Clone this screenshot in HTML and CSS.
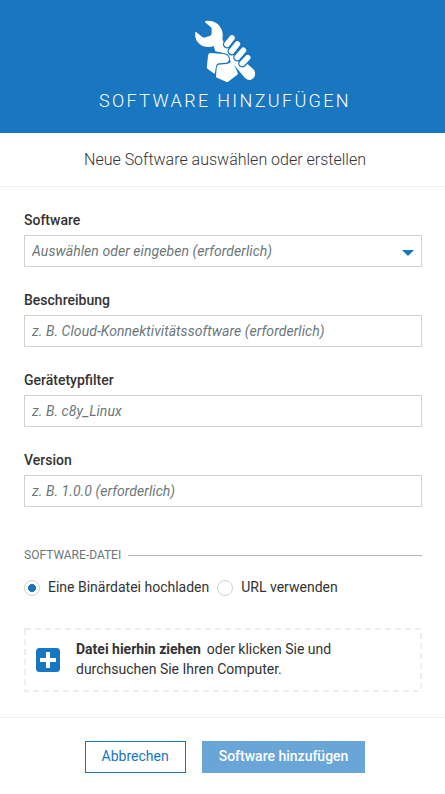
FILE: index.html
```html
<!DOCTYPE html>
<html lang="de">
<head>
<meta charset="utf-8">
<title>Software hinzufügen</title>
<link rel="stylesheet" href="styles.css">
</head>
<body>
<form class="modal">
  <header class="modal-header">
    <svg class="tool-icon" viewBox="39 24 192 192" aria-hidden="true">
      <path fill="#fff" d="M75 37Q72 33 83 32C112 30 134 57 127 86Q128 94 134 99L220 178C229 187 226 203 216 208Q205 213 195 204L134 132Q127 127 117 126L106 124L101 108Q90 112 77 110C54 106 43 86 46 67Q47 63 51 68L67 81Q71 84 77 82L91 77Q95 75 95 70V56Q95 53 91 50Z"/>
      <g class="finger-gap"><path d="M156 84L141 103M172 102L155 124M190 121L172 142M203 143L187 160"/></g>
      <g class="finger"><path d="M156 84L141 103M172 102L155 124M190 121L172 142M203 143L187 160"/></g>
      <path class="palm" d="M90 129L129 132Q140 132 145 140Q151 154 139 158L117 160Q109 161 108 170L104 192L84 178Q79 174 81 166L84 137Q85 129 90 129Z"/>
      <path fill="#fff" d="M115 164L140 162Q151 160 155 149L173 188Q175 192 170 196L142 217L108 202L110 173Q111 165 115 164Z"/>
    </svg>
    <h1>Software hinzufügen</h1>
  </header>
  <p class="subtitle">Neue Software auswählen oder erstellen</p>
  <div class="modal-body">
    <div class="field">
      <label for="software">Software</label>
      <div class="select-box">
        <input id="software" placeholder="Auswählen oder eingeben (erforderlich)">
        <svg class="caret" viewBox="0 0 12 6" aria-hidden="true"><path d="M0 0H12L6 6Z" fill="#1776bf"/></svg>
      </div>
    </div>
    <div class="field">
      <label for="description">Beschreibung</label>
      <input id="description" placeholder="z. B. Cloud-Konnektivitätssoftware (erforderlich)">
    </div>
    <div class="field">
      <label for="filter">Gerätetypfilter</label>
      <input id="filter" placeholder="z. B. c8y_Linux">
    </div>
    <div class="field">
      <label for="version">Version</label>
      <input id="version" placeholder="z. B. 1.0.0 (erforderlich)">
    </div>
    <div class="legend">Software-Datei</div>
    <div class="radios">
      <label><input type="radio" name="source" checked><span>Eine Binärdatei hochladen</span></label>
      <label><input type="radio" name="source"><span>URL verwenden</span></label>
    </div>
    <div class="dropzone">
      <svg class="dash-frame" aria-hidden="true"><rect x="1" y="1" width="396" height="62"/></svg>
      <svg class="plus" viewBox="0 0 24 24" aria-hidden="true"><rect width="24" height="24" rx="3.5" fill="#1776bf"/><path d="M12 4V20M4 12H20" stroke="#fff" stroke-width="4"/></svg>
      <div class="drop-text">
        <div class="drop-line"><strong>Datei hierhin ziehen</strong><span>oder klicken Sie und</span></div>
        <div>durchsuchen Sie Ihren Computer.</div>
      </div>
    </div>
  </div>
  <footer class="modal-footer">
    <button type="button" class="btn">Abbrechen</button>
    <button type="button" class="btn btn-primary">Software hinzufügen</button>
  </footer>
</form>
</body>
</html>
```
FILE: styles.css
```css
* { box-sizing: border-box; }
body {
  margin: 0;
  background: #fff;
  color: #333;
  font: 14px/20px Roboto, sans-serif;
}
.modal { width: 445px; }
.modal-header {
  height: 133px;
  padding-top: 18px;
  background: #1976c0;
  color: #fff;
  display: flex;
  flex-direction: column;
  align-items: center;
}
.tool-icon { width: 64px; height: 64px; margin-left: 5px; }
.finger-gap, .finger { fill: none; stroke-linecap: round; }
.finger-gap { stroke: #1976c0; stroke-width: 25; }
.finger { stroke: #fff; stroke-width: 17; }
.palm { fill: #fff; stroke: #1976c0; stroke-width: 6; paint-order: stroke; }
h1 {
  margin: 7px 0 0 5px;
  font-size: 18px;
  line-height: 24px;
  font-weight: 300;
  letter-spacing: 2.35px;
  text-transform: uppercase;
}
.subtitle {
  margin: 0;
  height: 54px;
  padding: 17px 0 0 5px;
  border-bottom: 1px solid #eee;
  font-size: 16px;
  font-weight: 300;
  text-align: center;
}
.modal-body { padding: 23px 23px 25px 24px; }
.field { height: 80px; }
.field > label { display: block; height: 25px; font-weight: 500; }
.field input {
  display: block;
  width: 100%;
  height: 32px;
  padding: 0 7px;
  border: 1px solid #ccd1d5;
  border-radius: 0;
  background: #fff;
  font: 14px Roboto, sans-serif;
  letter-spacing: 0.06px;
}
.field input::placeholder { color: #6b777b; opacity: 1; font-style: italic; }
.select-box { position: relative; }
.caret { position: absolute; right: 8px; top: 15px; width: 12px; height: 6px; }
.legend {
  display: flex;
  align-items: center;
  gap: 7px;
  margin-top: 15px;
  height: 20px;
  color: #6b777b;
  font-size: 12px;
  text-transform: uppercase;
}
.legend::after { content: ""; flex: 1; height: 1px; background: #adb8bd; margin-top: 1px; }
.radios { display: flex; gap: 8px; margin-top: 12px; height: 20px; }
.radios label { display: flex; align-items: center; gap: 8px; white-space: nowrap; }
.radios input {
  appearance: none;
  width: 16px;
  height: 16px;
  margin: 2px 0 0;
  border: 1px solid #cfd2d5;
  border-radius: 50%;
  background: #fff;
}
.radios input:checked { background: radial-gradient(circle, #1776bf 3.7px, transparent 4.3px); }
.dropzone {
  position: relative;
  display: flex;
  align-items: center;
  height: 64px;
  margin-top: 31px;
  padding: 0 12px;
  gap: 16px;
}
.dash-frame { position: absolute; inset: 0; width: 100%; height: 100%; }
.dash-frame rect { fill: none; stroke: #eee; stroke-width: 2; stroke-dasharray: 6 4; }
.plus { width: 24px; height: 24px; flex: none; }
.drop-text { padding-bottom: 2px; }
.drop-line { display: flex; gap: 6px; }
.modal-footer {
  display: flex;
  justify-content: center;
  gap: 16px;
  height: 77px;
  padding: 23px 0 0 5px;
  border-top: 1px solid #eee;
}
.btn {
  height: 32px;
  padding: 0 16px 2px;
  border: 1px solid #1776bf;
  background: #fff;
  color: #1776bf;
  font: 14px/20px Roboto, sans-serif;
}
.btn-primary { background: #69a5d7; border-color: #69a5d7; color: #fff; font-weight: 500; }
```
